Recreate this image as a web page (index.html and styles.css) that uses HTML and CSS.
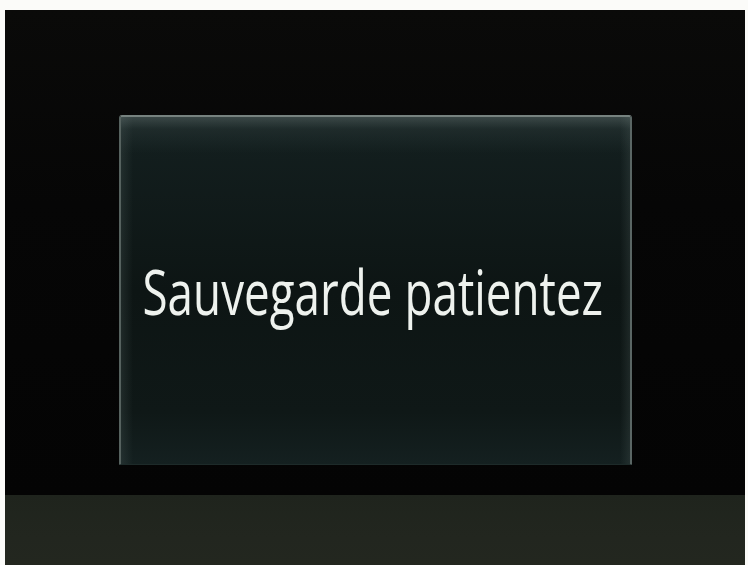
FILE: index.html
```html
<!DOCTYPE html>
<html lang="fr">
<head>
<meta charset="utf-8">
<title>Sauvegarde</title>
<link rel="stylesheet" href="styles.css">
</head>
<body>
<div class="screen">
  <div class="stage">
    <div class="dialog">
      <div class="message">Sauvegarde patientez</div>
    </div>
  </div>
  <div class="bottom-band"></div>
</div>
</body>
</html>
```
FILE: styles.css
```css
html, body {
  margin: 0;
  padding: 0;
  background: #fbfbf9;
  width: 748px;
  height: 565px;
  overflow: hidden;
}

.screen {
  margin: 10px 0 0 5px;
  width: 740px;
  height: 555px;
  display: flex;
  flex-direction: column;
  background: #050505;
}

.stage {
  height: 485px;
  box-sizing: border-box;
  padding: 105px 0 0 114px;
  background: linear-gradient(180deg, #0a0a09 0%, #060606 40%, #040404 100%);
}

.dialog {
  width: 513px;
  height: 350px;
  box-sizing: border-box;
  border-radius: 3px 3px 1px 1px;
  border-top: 2px solid #76827f;
  border-left: 2px solid #56625f;
  border-right: 2px solid #5a6664;
  border-bottom: 1px solid #1d2a29;
  background:
    linear-gradient(180deg, rgba(120,135,133,0.38) 0px, rgba(80,96,95,0.18) 12px, rgba(30,44,44,0) 36px),
    linear-gradient(90deg, rgba(70,85,83,0.3) 0px, rgba(0,0,0,0) 12px, rgba(0,0,0,0) 499px, rgba(70,85,83,0.28) 509px),
    linear-gradient(180deg, #142020 0%, #0d1514 50%, #0f1817 85%, #142020 100%);
  display: flex;
  align-items: center;
  justify-content: center;
}

.message {
  font-family: "Open Sans", "Liberation Sans", sans-serif;
  font-size: 63px;
  line-height: 1;
  color: #eef2ee;
  white-space: nowrap;
  transform: scaleX(0.727);
  margin: 0 6px 0 0;
}

.bottom-band {
  flex: 1;
  background: linear-gradient(180deg, #1f241d 0%, #22261f 60%, #23271f 100%);
}
```
